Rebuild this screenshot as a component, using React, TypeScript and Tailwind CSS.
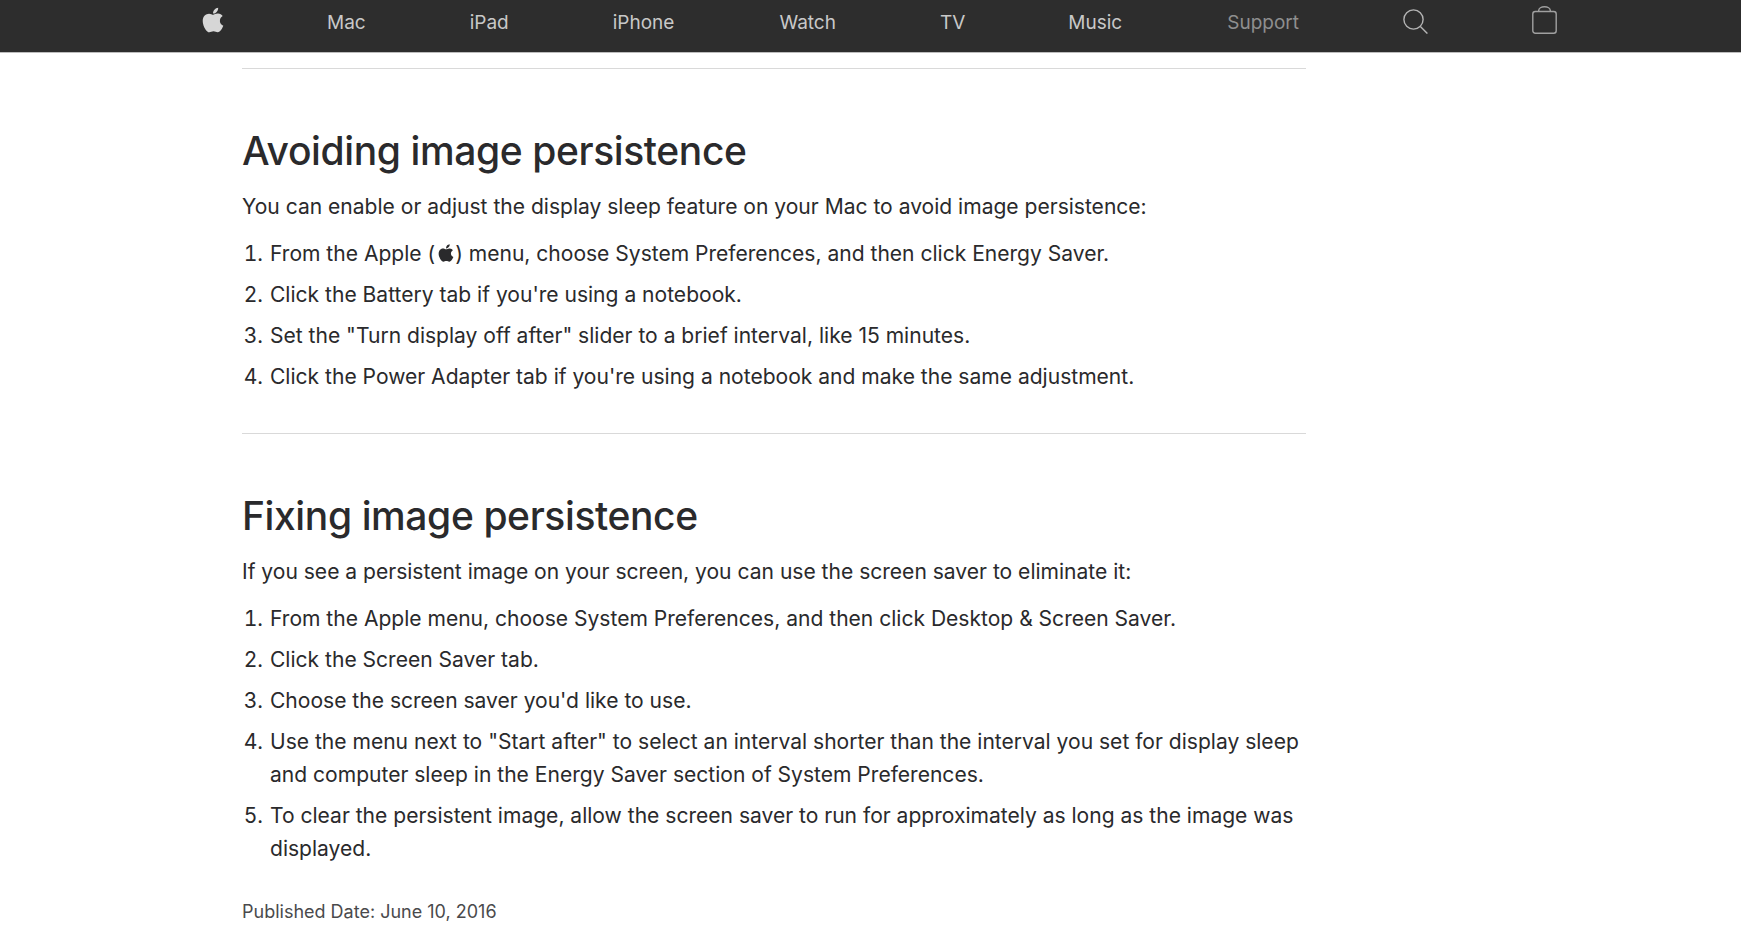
import { FaApple } from "react-icons/fa";

const font = { fontFamily: "Inter, sans-serif" };

function Section({ title, intro, items }: { title: string; intro: string; items: React.ReactNode[] }) {
  return (
    <section>
      <h2 className="text-[39px] leading-[48px] font-medium tracking-[-0.01em] text-[#2a2a2c]">{title}</h2>
      <p className="mt-[15px] text-[21.05px] leading-[33px] text-[#2a2a2c]">{intro}</p>
      <ol className="mt-[14px] flex flex-col gap-[8px] text-[21.05px] leading-[33px] text-[#2a2a2c]">
        {items.map((it, i) => (
          <li key={i} className="flex">
            <span className="w-[28px] shrink-0 text-right pr-[7px] tabular-nums">{i + 1}.</span>
            <span className="flex-1">{it}</span>
          </li>
        ))}
      </ol>
    </section>
  );
}

export default function App() {
  return (
    <div className="min-h-[952px] bg-white overflow-hidden" style={font}>
      <nav className="h-[53px] bg-[#2d2d2d] border-b border-[#bdbdbd] flex items-center pl-[201px] pb-[6px] text-[19px] text-[#c8c8c8]">
        <FaApple className="w-[24px] h-[28px] text-[#d6d6d6] mb-[7px]" />
        <span className="ml-[102px]">Mac</span>
        <span className="ml-[104px]">iPad</span>
        <span className="ml-[104px]">iPhone</span>
        <span className="ml-[105px]">Watch</span>
        <span className="ml-[104px]">TV</span>
        <span className="ml-[103px]">Music</span>
        <span className="ml-[105px] text-[#8f8f8f]">Support</span>
        <svg className="ml-[104px] w-[25px] h-[25px] mb-[3px]" viewBox="0 0 25 25" fill="none" stroke="#b4b4b4" strokeWidth="1.4">
          <circle cx="10.5" cy="10.5" r="9.6" />
          <path d="M17.4 17.6 L24.4 24.6" />
        </svg>
        <svg className="ml-[104px] w-[25px] h-[28px] mb-[6px]" viewBox="0 0 25 28" fill="none" stroke="#a0a0a0" strokeWidth="1.4">
          <rect x="0.8" y="5.5" width="23.4" height="21.7" rx="2.5" />
          <path d="M6.7 5.5 V4.5 a5.8 3.8 0 0 1 11.6 0 V5.5" />
        </svg>
      </nav>
      <main className="ml-[242px] w-[1064px]">
        <hr className="mt-[15px] border-0 h-px bg-[#d9d9d9]" />
        <div className="mt-[58px]">
          <Section
            title="Avoiding image persistence"
            intro="You can enable or adjust the display sleep feature on your Mac to avoid image persistence:"
            items={[
              <>From the Apple (<FaApple className="inline w-[20px] h-[20px] mb-[4px] ml-[1px] -mr-[1px] text-[#2a2a2c]" />) menu, choose System Preferences, and then click Energy Saver.</>,
              "Click the Battery tab if you're using a notebook.",
              'Set the "Turn display off after" slider to a brief interval, like 15 minutes.',
              "Click the Power Adapter tab if you're using a notebook and make the same adjustment.",
            ]}
          />
        </div>
        <hr className="mt-[40px] border-0 h-px bg-[#d9d9d9]" />
        <div className="mt-[58px]">
          <Section
            title="Fixing image persistence"
            intro="If you see a persistent image on your screen, you can use the screen saver to eliminate it:"
            items={[
              "From the Apple menu, choose System Preferences, and then click Desktop & Screen Saver.",
              "Click the Screen Saver tab.",
              "Choose the screen saver you'd like to use.",
              'Use the menu next to "Start after" to select an interval shorter than the interval you set for display sleep and computer sleep in the Energy Saver section of System Preferences.',
              "To clear the persistent image, allow the screen saver to run for approximately as long as the image was displayed.",
            ]}
          />
        </div>
        <p className="mt-[33px] text-[18px] leading-[28px] text-[#4a4a4c]">Published Date: June 10, 2016</p>
      </main>
    </div>
  );
}
